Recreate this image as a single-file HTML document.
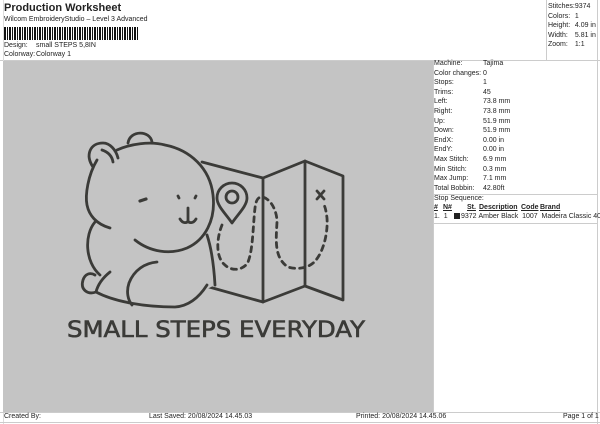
<!DOCTYPE html>
<html><head><meta charset="utf-8"><style>
*{margin:0;padding:0;box-sizing:border-box}
body{width:600px;height:424px;background:#fff;font-family:"Liberation Sans",sans-serif;color:#222;position:relative;overflow:hidden;font-size:7px}
.a{position:absolute;white-space:nowrap}
.gray{position:absolute;left:3px;top:61px;width:430px;height:351px;background:#c4c4c4}
.rt{position:absolute;font-size:7px;line-height:9.6px}
.rt td{padding:0;height:9.6px;white-space:nowrap}
</style></head><body>
<div class="a" style="left:4px;top:2px;font-size:11px;font-weight:bold">Production Worksheet</div>
<div class="a" style="left:4px;top:16px">Wilcom EmbroideryStudio – Level 3 Advanced</div>
<div class="a" style="left:4px;top:27px;width:134px;height:13px;background:repeating-linear-gradient(90deg,#111 0 2px,#fff 2px 3px,#111 3px 4px,#fff 4px 5px)"></div>
<div class="a" style="left:4px;top:42px">Design:</div><div class="a" style="left:36px;top:42px">small STEPS 5,8IN</div>
<div class="a" style="left:4px;top:51px">Colorway:</div><div class="a" style="left:36px;top:51px">Colorway 1</div>
<div class="a" style="left:0;top:60px;width:600px;border-top:1px solid #ccc"></div>
<div class="a" style="left:3px;top:0;height:424px;border-left:1px solid #ddd"></div>
<div class="a" style="left:597px;top:0;height:424px;border-left:1px solid #ccc"></div>
<div class="gray"></div>
<div class="a" style="left:546px;top:0;height:60px;border-left:1px solid #ccc"></div>
<div class="a" style="left:433px;top:61px;height:351px;border-left:1px solid #ccc"></div>
<table class="rt" style="left:548px;top:2px;border-collapse:collapse"><tr><td style="width:25px">Stitches:</td><td>9374</td></tr><tr><td>Colors:</td><td>1</td></tr><tr><td>Height:</td><td>4.09 in</td></tr><tr><td>Width:</td><td>5.81 in</td></tr><tr><td>Zoom:</td><td>1:1</td></tr></table>
<table class="rt" style="left:434px;top:59px;border-collapse:collapse"><tr><td style="width:49px">Machine:</td><td>Tajima</td></tr><tr><td>Color changes:</td><td>0</td></tr><tr><td>Stops:</td><td>1</td></tr><tr><td>Trims:</td><td>45</td></tr><tr><td>Left:</td><td>73.8 mm</td></tr><tr><td>Right:</td><td>73.8 mm</td></tr><tr><td>Up:</td><td>51.9 mm</td></tr><tr><td>Down:</td><td>51.9 mm</td></tr><tr><td>EndX:</td><td>0.00 in</td></tr><tr><td>EndY:</td><td>0.00 in</td></tr><tr><td>Max Stitch:</td><td>6.9 mm</td></tr><tr><td>Min Stitch:</td><td>0.3 mm</td></tr><tr><td>Max Jump:</td><td>7.1 mm</td></tr><tr><td>Total Bobbin:</td><td>42.80ft</td></tr></table>
<div class="a" style="left:434px;top:194px;width:163px;border-top:1px solid #ccc"></div>
<div class="a" style="left:434px;top:195px">Stop Sequence:</div>
<div class="a" style="left:434px;top:204px;font-weight:bold;text-decoration:underline">#</div>
<div class="a" style="left:443px;top:204px;font-weight:bold;text-decoration:underline">N#</div>
<div class="a" style="left:467px;top:204px;font-weight:bold;text-decoration:underline">St.</div>
<div class="a" style="left:479px;top:204px;font-weight:bold;text-decoration:underline">Description</div>
<div class="a" style="left:521px;top:204px;font-weight:bold;text-decoration:underline">Code</div>
<div class="a" style="left:540px;top:204px;font-weight:bold;text-decoration:underline">Brand</div>
<div class="a" style="left:434px;top:213px">1.&nbsp;&nbsp;1</div>
<div class="a" style="left:454px;top:213px;width:6px;height:6px;background:#222"></div>
<div class="a" style="left:461px;top:213px">9372&nbsp;Amber Black&nbsp;&nbsp;1007&nbsp;&nbsp;Madeira Classic 40</div>
<div class="a" style="left:434px;top:223px;width:163px;border-top:1px solid #ccc"></div>
<div class="a" style="left:0;top:412px;width:600px;border-top:1px solid #ccc"></div>
<div class="a" style="left:0;top:422px;width:600px;border-top:1px solid #ccc"></div>
<div class="a" style="left:4px;top:413px">Created By:</div>
<div class="a" style="left:149px;top:413px">Last Saved: 20/08/2024 14.45.03</div>
<div class="a" style="left:356px;top:413px">Printed: 20/08/2024 14.45.06</div>
<div class="a" style="left:563px;top:413px">Page 1 of 1</div>
<svg class="a" style="left:0;top:0" width="600" height="424" viewBox="0 0 600 424">
<g fill="none" stroke="#3b3b38" stroke-width="2.8" stroke-linecap="round" stroke-linejoin="round">
<path d="M202,162 L263,178 L305,161 L343,176 L343,300 L305,286 L263,302 L202,285"/>
<path d="M263,178 V302 M305,161 V286"/>
<path d="M232,223 C226,214 217,206 217,198 A15,15 0 0 1 247,198 C247,206 238,214 232,223 Z"/>
<circle cx="232" cy="197" r="6"/>
<path d="M317,191 L324,199 M324,191 L317,199"/>
<path stroke-dasharray="5,5" d="M222,225 C216,240 216,258 225,265 C232,272 244,270 248,262 C253,250 253,225 255,208 C256,200 258,197 262,197 C270,198 277,210 277,222 C276,240 274,258 288,267 C298,270 310,268 316,260 C324,250 328,232 327,218 C326,210 325,206 323,203"/>
<path stroke="none" fill="#c4c4c4" d="M117,150 C130,144 150,141 165,145 C190,150 210,168 213,195 C216,220 208,240 207,235 C212,250 214,268 215,285 L205,290 C195,300 185,307 175,307 L100,295 L90,230 L90,160 Z"/>
<path d="M128,143 C130,130 150,130 152,142"/>
<path d="M93,167 C85,155 90,143 103,143 C110,143 116,150 118,158"/>
<path d="M102,150 C108,152 112,156 113,162"/>
<path d="M117,150 C130,144 150,141 165,145 C190,150 210,168 213,195 C216,220 205,240 187,248 C170,255 150,252 135,240"/>
<path d="M97,160 C88,175 85,195 87,205 C89,215 96,224 110,228"/>
<path d="M95,222 C84,235 85,262 100,275"/>
<path d="M207,235 C212,250 214,268 215,285"/>
<path d="M157,262 C145,263 134,270 129,283 C126,292 128,300 132,305"/>
<path d="M110,272 C100,280 97,288 96,292 C88,295 80,290 83,280 C85,274 90,272 95,275"/>
<path d="M96,292 C115,302 145,307 175,307 C190,306 200,296 207,285"/>
<path d="M140,201 L146,199" stroke-width="3.2"/>
<path d="M178,196 L179,198 M196,196 L195,198"/>
<path d="M188,208 V221 M180,219 C183,224 187,223 188,221 C189,223 193,224 196,219"/>
</g>
<text x="67" y="337" font-family="DejaVu Sans,Liberation Sans,sans-serif" font-size="22" fill="#3b3b38" stroke="#3b3b38" stroke-width="0.6" textLength="298" lengthAdjust="spacingAndGlyphs">SMALL STEPS EVERYDAY</text>
</svg>
</body></html>
